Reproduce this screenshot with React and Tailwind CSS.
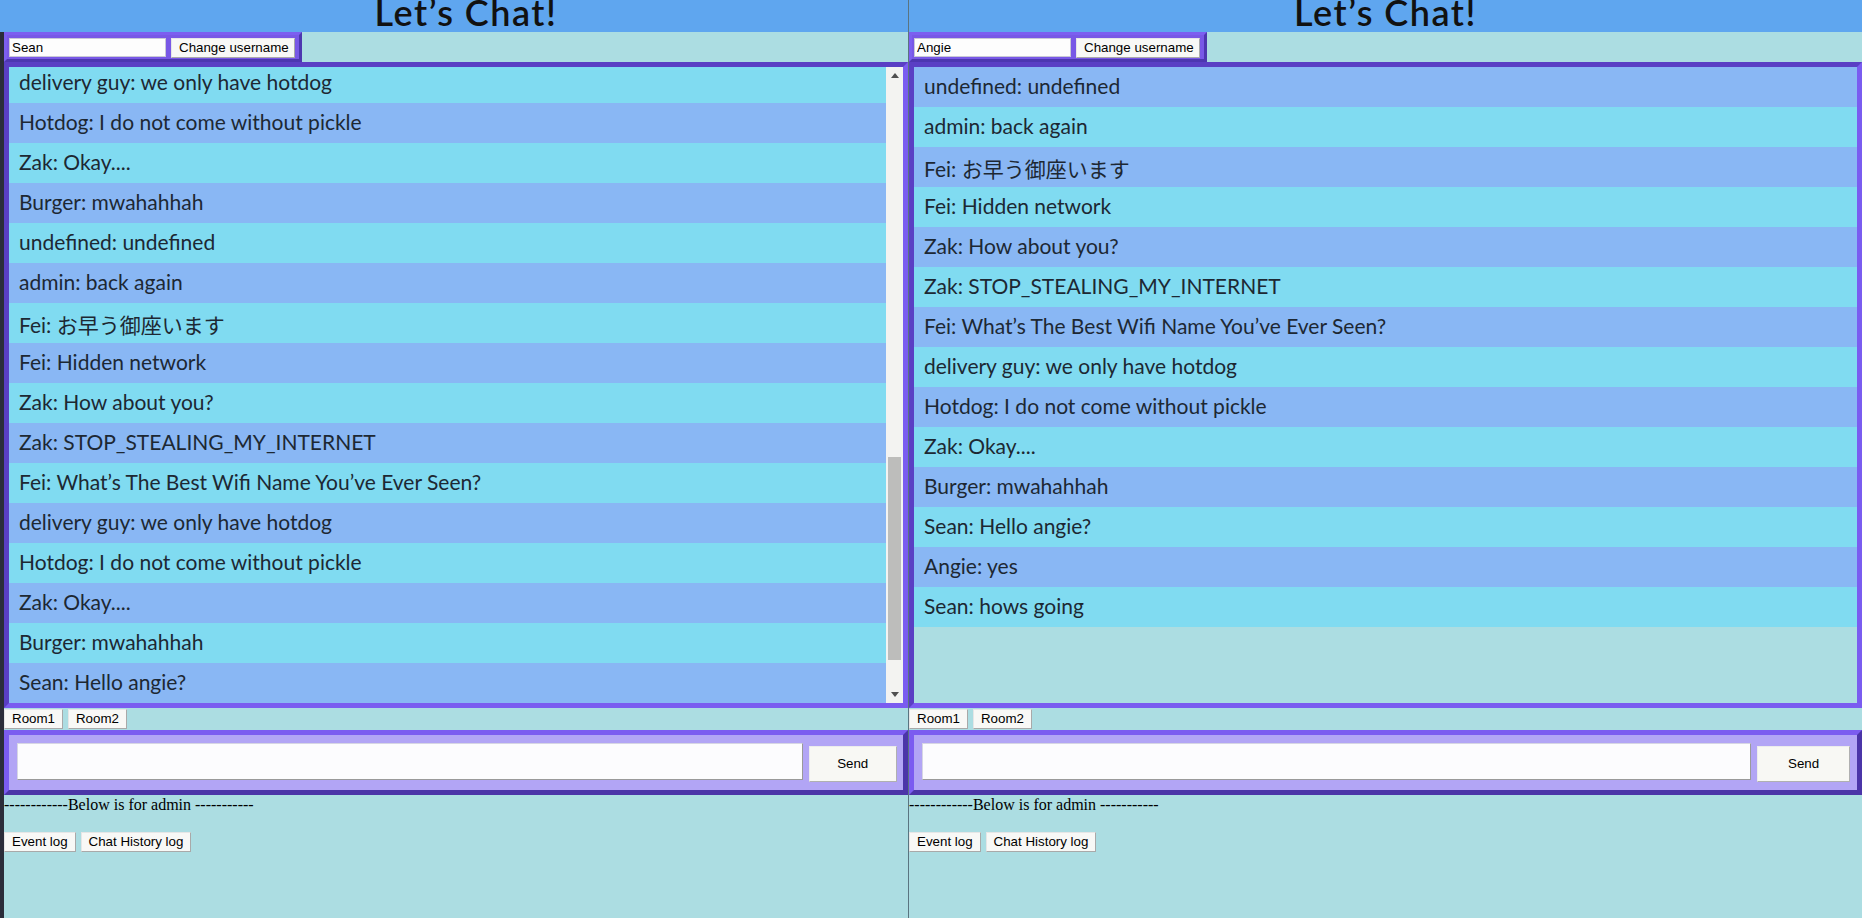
import React from "react";

const leftMsgs = [
  "delivery guy: we only have hotdog",
  "Hotdog: I do not come without pickle",
  "Zak: Okay....",
  "Burger: mwahahhah",
  "undefined: undefined",
  "admin: back again",
  "Fei: お早う御座います",
  "Fei: Hidden network",
  "Zak: How about you?",
  "Zak: STOP_STEALING_MY_INTERNET",
  "Fei: What’s The Best Wifi Name You’ve Ever Seen?",
  "delivery guy: we only have hotdog",
  "Hotdog: I do not come without pickle",
  "Zak: Okay....",
  "Burger: mwahahhah",
  "Sean: Hello angie?",
];

const rightMsgs = [
  "undefined: undefined",
  "admin: back again",
  "Fei: お早う御座います",
  "Fei: Hidden network",
  "Zak: How about you?",
  "Zak: STOP_STEALING_MY_INTERNET",
  "Fei: What’s The Best Wifi Name You’ve Ever Seen?",
  "delivery guy: we only have hotdog",
  "Hotdog: I do not come without pickle",
  "Zak: Okay....",
  "Burger: mwahahhah",
  "Sean: Hello angie?",
  "Angie: yes",
  "Sean: hows going",
];

function Btn({ children, className = "" }) {
  return (
    <button
      type="button"
      className={`h-[20px] px-[7px] bg-[#f8f8f6] border border-t-[#e6e6e6] border-l-[#e6e6e6] border-r-[#a9a9a9] border-b-[#a9a9a9] text-[13.33px] leading-none text-black font-['Liberation_Sans',Arial,sans-serif] whitespace-nowrap ${className}`}
    >
      {children}
    </button>
  );
}

function Arrow({ down }) {
  return (
    <div className="h-[17px] flex items-center justify-center">
      <svg width="8" height="5" viewBox="0 0 8 5">
        {down ? (
          <polygon points="0,0 8,0 4,5" fill="#505050" />
        ) : (
          <polygon points="0,5 8,5 4,0" fill="#505050" />
        )}
      </svg>
    </div>
  );
}

function Scrollbar() {
  return (
    <div className="w-[17px] bg-[#f3f3f1] flex flex-col">
      <Arrow />
      <div className="h-[373px]" />
      <div className="h-[203px] mx-[2px] bg-[#bdbdbb]" />
      <div className="flex-1" />
      <Arrow down />
    </div>
  );
}

function Pane({ isLeft, user, msgs }) {
  return (
    <div className={`flex flex-col ${isLeft ? "w-[908px]" : "w-[953px]"} bg-[#acdde2]`}>
      <div
        className={`h-[32px] bg-[#5fa6ef] overflow-hidden flex justify-center ${isLeft ? "pl-[24px]" : ""}`}
      >
        <h1 className="text-[36px] font-semibold tracking-[1.5px] leading-[24px] text-[#111] font-['Lato','Noto_Sans',sans-serif] whitespace-nowrap">
          Let’s Chat!
        </h1>
      </div>
      <div className={`flex-1 flex flex-col ${isLeft ? "border-l-[4px] border-l-[#2b2d3a]" : ""}`}>
        {/* username row */}
        <div className="h-[30px] flex">
          <div className="flex items-start gap-[5px] pl-[2px] pr-[4px] pt-[3px] border-[3px] border-t-[#7c5ff0] border-l-[#7c5ff0] border-r-[#4d37b0] border-b-[#4d37b0] bg-[#7858e6]">
            <input
              readOnly
              value={user}
              className="w-[157px] h-[19px] px-[2px] bg-[#fdfdfd] border border-[#c9c9d6] text-[13.33px] text-black font-['Liberation_Sans',Arial,sans-serif] outline-none"
            />
            <Btn className="h-[19px] w-[124px] px-0">Change username</Btn>
          </div>
        </div>

        {/* chat box */}
        <div className="h-[646px] flex border-[5px] border-t-[#5a3fc4] border-l-[#5a3fc4] border-r-[#7a5cf0] border-b-[#7a5cf0]">
          <div className="flex-1 overflow-hidden">
            <div className={isLeft ? "-mt-[4px]" : ""}>
              {msgs.map((m, i) => {
                const cyan = isLeft ? i % 2 === 0 : i % 2 === 1;
                const jp = /[\u3040-\u30ff\u4e00-\u9fff]/.test(m);
                return (
                  <div
                    key={i}
                    className={`h-[40px] pl-[10px] text-[21px] text-[#1d2833] whitespace-nowrap overflow-hidden font-['Lato','Noto_Sans_CJK_JP',sans-serif] ${jp ? "pt-[6px]" : "pt-[3px]"} ${cyan ? "bg-[#80dbf1]" : "bg-[#89b7f4]"}`}
                  >
                    {m}
                  </div>
                );
              })}
            </div>
          </div>
          {isLeft && <Scrollbar />}
        </div>

        {/* room buttons */}
        <div className="h-[22px] pt-[1px] flex gap-[5px]">
          <Btn>Room1</Btn>
          <Btn>Room2</Btn>
        </div>

        {/* input form */}
        <div className="h-[65px] flex items-start gap-[6px] pl-[8px] border-[5px] border-t-[#7b5cf0] border-l-[#7b5cf0] border-r-[#4b35a8] border-b-[#4b35a8] bg-[#b2a5f5]">
          <textarea
            readOnly
            className="w-[88.7%] h-[37px] mt-[8px] resize-none bg-[#fcfcfe] border border-t-[#d6d6e4] border-l-[#d6d6e4] border-r-[#9a9a9a] border-b-[#9a9a9a] outline-none"
          />
          <button
            type="button"
            className="w-[9.9%] h-[36px] mt-[11px] bg-[#f8f8f4] border border-t-[#ececec] border-l-[#ececec] border-r-[#b0b0b0] border-b-[#b0b0b0] text-[13.33px] text-black font-['Liberation_Sans',Arial,sans-serif]"
          >
            Send
          </button>
        </div>

        {/* admin */}
        <div className="pt-[1px] text-[16px] leading-[18px] text-black font-['Liberation_Serif','Times_New_Roman',serif] whitespace-nowrap">
          ------------Below is for admin -----------
        </div>
        <div className="h-[18px]" />
        <div className="flex gap-[5px]">
          <Btn>Event log</Btn>
          <Btn>Chat History log</Btn>
        </div>
      </div>
    </div>
  );
}

export default function App() {
  return (
    <div className="w-[1862px] h-[918px] overflow-hidden flex bg-[#acdde2]">
      <Pane isLeft user="Sean" msgs={leftMsgs} />
      <div className="w-[1px] bg-[#5a7480]" />
      <Pane user="Angie" msgs={rightMsgs} />
    </div>
  );
}
